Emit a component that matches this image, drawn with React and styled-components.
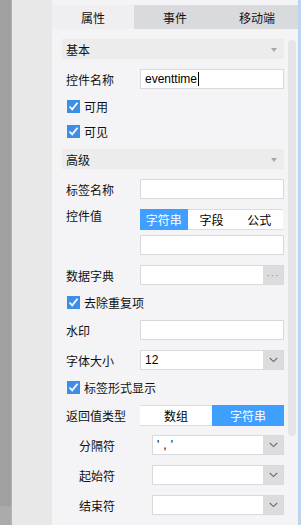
import React from 'react'
import styled, { createGlobalStyle } from 'styled-components'

const GlobalStyle = createGlobalStyle`
  html, body {
    margin: 0;
    padding: 0;
    width: 301px;
    height: 525px;
    overflow: hidden;
    font-family: "Liberation Sans", "Noto Sans CJK SC", sans-serif;
    font-size: 12px;
    color: #111;
  }
`

const Screen = styled.div`
  display: flex;
  width: 301px;
  height: 525px;
`

const GrayStrip = styled.div`
  width: 11px;
  display: flex;
  flex-direction: column;
  border-right: 1px solid #b4b4b4;
`
const GrayTop = styled.div`
  flex: 1;
  background: #a0a0a0;
`
const GrayBottom = styled.div`
  height: 19px;
  background: #ababab;
`

const SideColumn = styled.div`
  width: 40px;
  background: #e8e8e8;
`

const Panel = styled.div`
  width: 246px;
  background: #f4f4f6;
  display: flex;
  flex-direction: column;
`

const BlueEdge = styled.div`
  flex: 1;
  background: #bcd5ef;
`

const Tabs = styled.div`
  display: flex;
  margin-top: 5px;
  height: 24px;
`
const Tab = styled.div`
  flex: 1;
  display: flex;
  align-items: center;
  justify-content: center;
  background: ${({ active }) => (active ? '#efeff1' : '#d9dadd')};
  font-size: 12px;
`

const Body = styled.div`
  display: flex;
  flex: 1;
`

const Content = styled.div`
  flex: 1;
  padding: 0 4px 0 10px;
  display: flex;
  flex-direction: column;
`

const ScrollTrack = styled.div`
  width: 8px;
  height: 396px;
  margin: 11px 2px 0 0;
  border-radius: 4px;
  background: #e5e5e7;
`

const SectionHeader = styled.div`
  height: 20px;
  margin: ${({ first }) => (first ? '10px 0 5px' : '5px 0 5px')};
  background: #ececec;
  display: flex;
  align-items: center;
  justify-content: space-between;
  padding: 0 7px 0 4px;
`

const Triangle = styled.div`
  width: 0;
  height: 0;
  border-left: 3.5px solid transparent;
  border-right: 3.5px solid transparent;
  border-top: 4px solid #a8a8a8;
  margin-top: 1px;
`

const Row = styled.div`
  display: flex;
  align-items: ${({ top }) => (top ? 'flex-start' : 'center')};
  min-height: 30px;
  padding-left: ${({ sub }) => (sub ? '17px' : '4px')};
  padding-top: ${({ top }) => (top ? '5px' : '0')};
  padding-bottom: ${({ top }) => (top ? '5px' : '0')};
  box-sizing: border-box;
`

const Label = styled.div`
  width: ${({ sub }) => (sub ? '73px' : '74px')};
  flex-shrink: 0;
  line-height: ${({ top }) => (top ? '16px' : 'normal')};
`

const Stack = styled.div`
  flex: 1;
  display: flex;
  flex-direction: column;
  gap: 5px;
`

const Field = styled.div`
  flex: 1 1 auto;
  min-width: 0;
  height: 20px;
  box-sizing: border-box;
  background: #fff;
  border: 1px solid #d9d9dc;
  display: flex;
  align-items: center;
  padding-left: ${({ pad }) => pad || '4px'};
  font-size: 12px;
  color: #000;
`

const Caret = styled.span`
  display: inline-block;
  width: 1px;
  height: 14px;
  background: #000;
  margin-left: 1px;
`

const FieldText = styled.span`
  flex: 1;
  letter-spacing: ${({ spread }) => (spread ? '4px' : 'normal')};
`

const SideButton = styled.div`
  width: 20px;
  align-self: stretch;
  background: #dcdcdf;
  display: flex;
  align-items: center;
  justify-content: center;
  color: #8a8a8a;
  font-size: 10px;
  letter-spacing: 1px;
`

const Segmented = styled.div`
  display: flex;
  height: 21px;
  background: #fff;
  border-top: 1px solid #dcdcdf;
  border-bottom: 1px solid #dcdcdf;
  box-sizing: border-box;
  margin-right: ${({ inset }) => inset || '0'};
`

const Segment = styled.div`
  flex: 1;
  display: flex;
  align-items: center;
  justify-content: center;
  margin: -1px 0;
  background: ${({ active }) => (active ? '#409eff' : 'transparent')};
  color: ${({ active }) => (active ? '#fff' : '#000')};
  font-size: 12px;
`

const CheckRow = styled.div`
  display: flex;
  align-items: center;
  height: 25px;
  padding-left: 5px;
  gap: 4px;
`

const CheckBox = styled.div`
  width: 13px;
  height: 13px;
  background: #3d8ee6;
  display: flex;
  align-items: center;
  justify-content: center;
`

const Check = () => (
  <CheckBox>
    <svg width="11" height="11" viewBox="0 0 11 11">
      <path d="M1.5 5.5 L4.2 8.3 L9.5 1.8" fill="none" stroke="#fff" strokeWidth="1.8" />
    </svg>
  </CheckBox>
)

const Chevron = () => (
  <svg width="9" height="6" viewBox="0 0 9 6">
    <path d="M0.8 1 L4.5 4.6 L8.2 1" fill="none" stroke="#6a6a6a" strokeWidth="1.1" />
  </svg>
)

const Select = ({ value, spread }) => (
  <Field pad="4px">
    <FieldText spread={spread}>{value}</FieldText>
    <SideButton>
      <Chevron />
    </SideButton>
  </Field>
)

const App = () => {
  return (
    <>
      <GlobalStyle />
      <Screen>
        <GrayStrip>
          <GrayTop />
          <GrayBottom />
        </GrayStrip>
        <SideColumn />
        <Panel>
          <Tabs>
            <Tab active>属性</Tab>
            <Tab>事件</Tab>
            <Tab>移动端</Tab>
          </Tabs>
          <Body>
            <Content>
              <SectionHeader first>
                基本
                <Triangle />
              </SectionHeader>
              <Row>
                <Label>控件名称</Label>
                <Field>
                  eventtime
                  <Caret />
                </Field>
              </Row>
              <CheckRow>
                <Check />
                可用
              </CheckRow>
              <CheckRow>
                <Check />
                可见
              </CheckRow>

              <SectionHeader>
                高级
                <Triangle />
              </SectionHeader>
              <Row>
                <Label>标签名称</Label>
                <Field />
              </Row>
              <Row top>
                <Label top>控件值</Label>
                <Stack>
                  <Segmented inset="1px">
                    <Segment active>字符串</Segment>
                    <Segment>字段</Segment>
                    <Segment>公式</Segment>
                  </Segmented>
                  <Field />
                </Stack>
              </Row>
              <Row>
                <Label>数据字典</Label>
                <Field>
                  <FieldText />
                  <SideButton>···</SideButton>
                </Field>
              </Row>
              <CheckRow>
                <Check />
                去除重复项
              </CheckRow>
              <Row>
                <Label>水印</Label>
                <Field />
              </Row>
              <Row>
                <Label>字体大小</Label>
                <Select value="12" />
              </Row>
              <CheckRow>
                <Check />
                标签形式显示
              </CheckRow>
              <Row>
                <Label>返回值类型</Label>
                <Stack>
                  <Segmented>
                    <Segment>数组</Segment>
                    <Segment active>字符串</Segment>
                  </Segmented>
                </Stack>
              </Row>
              <Row sub>
                <Label sub>分隔符</Label>
                <Select value="','" spread />
              </Row>
              <Row sub>
                <Label sub>起始符</Label>
                <Select value="" />
              </Row>
              <Row sub>
                <Label sub>结束符</Label>
                <Select value="" />
              </Row>
            </Content>
            <ScrollTrack />
          </Body>
        </Panel>
        <BlueEdge />
      </Screen>
    </>
  )
}

export default App
